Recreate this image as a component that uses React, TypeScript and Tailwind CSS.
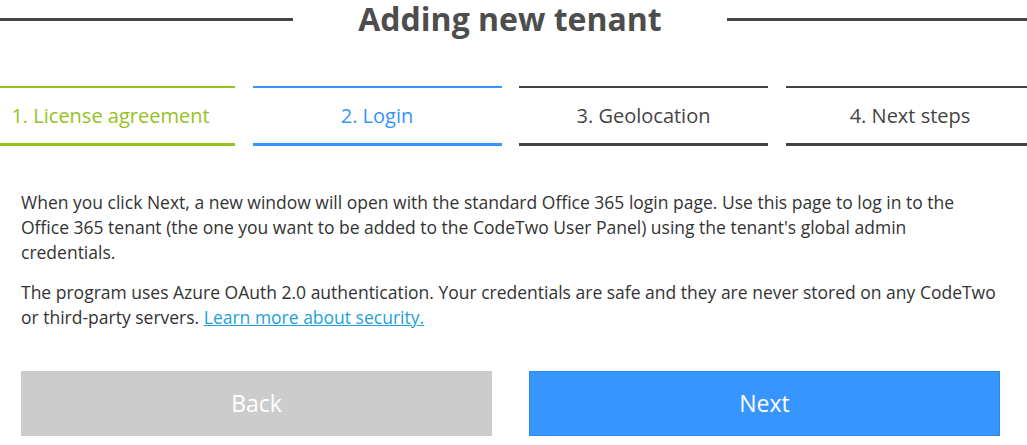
import React from "react";

export default function App() {
  return (
    <div className="w-[1027px] h-[445px] overflow-hidden bg-white text-[#333] font-['Open_Sans','Liberation_Sans',sans-serif]">
      <div className="flex items-center h-[38px]">
        <div className="w-[293px] h-[3px] bg-[#444] shrink-0" />
        <h1 className="flex-1 text-center text-[32px] font-bold text-[#4d4d4d] leading-[38px] whitespace-nowrap">Adding new tenant</h1>
        <div className="w-[300px] h-[3px] bg-[#444] shrink-0" />
      </div>
      <div className="ml-[-14px] mt-[48px] grid grid-cols-[249px_249px_249px_249px] gap-x-[17.5px]">
        <div className="h-[60px] border-t-2 border-b-[3px] border-[#96c11f] text-[#96c11f] flex items-center justify-center text-[20px]">1. License agreement</div>
        <div className="h-[60px] border-t-2 border-b-[3px] border-[#3795f9] text-[#3795f9] flex items-center justify-center text-[20px]">2. Login</div>
        <div className="h-[60px] border-t-2 border-b-[3px] border-[#444] text-[#444] flex items-center justify-center text-[20px]">3. Geolocation</div>
        <div className="h-[60px] border-t-2 border-b-[3px] border-[#444] text-[#444] flex items-center justify-center text-[20px]">4. Next steps</div>
      </div>
      <div className="px-[21px] mt-[44px] text-[17.5px] leading-[25px] text-[#333]">
        <p>When you click Next, a new window will open with the standard Office 365 login page. Use this page to log in to the Office 365 tenant (the one you want to be added to the CodeTwo User Panel) using the tenant's global admin<br />credentials.</p>
        <p className="mt-[15px]">The program uses Azure OAuth 2.0 authentication. Your credentials are safe and they are never stored on any CodeTwo or third-party servers. <a className="text-[#1ea0d8] underline" href="#">Learn more about security.</a></p>
      </div>
      <div className="flex gap-[37px] px-[21px] mt-[41px]">
        <button className="w-[471px] h-[65px] bg-[#cdcccd] text-white text-[23px]">Back</button>
        <button className="w-[471px] h-[65px] bg-[#3795ff] border border-[#2a88f0] text-white text-[23px]">Next</button>
      </div>
    </div>
  );
}
